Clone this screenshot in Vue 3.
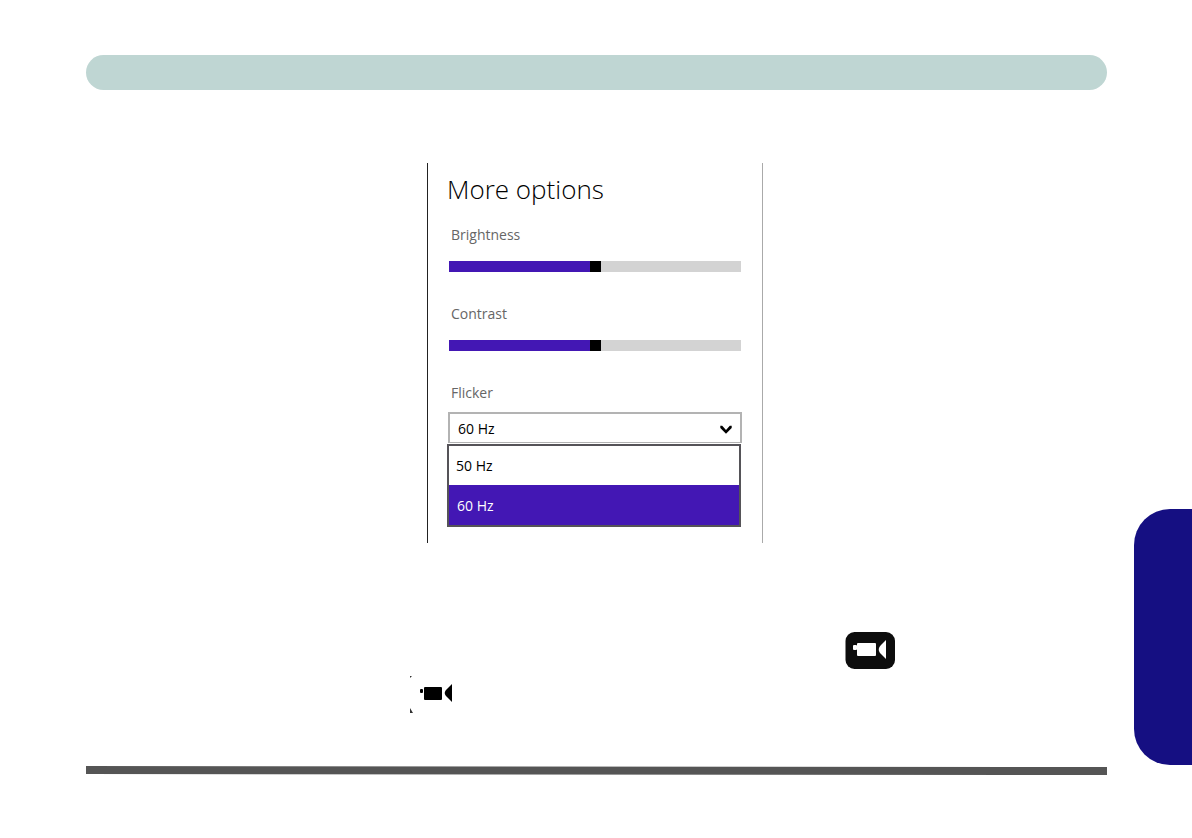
<script setup>
import { ref } from 'vue'

const sliders = ref([
  { id: 'brightness', label: 'Brightness', value: 50 },
  { id: 'contrast', label: 'Contrast', value: 50 },
])
const rates = ['50 Hz', '60 Hz']
const flicker = ref('60 Hz')
</script>

<template>
  <div class="page">
    <main class="content">
      <header class="banner"></header>

      <div class="figure">
        <section class="panel">
          <h1>More options</h1>
          <div v-for="s in sliders" :key="s.id" class="field">
            <label :for="s.id">{{ s.label }}</label>
            <input
              :id="s.id"
              v-model.number="s.value"
              type="range"
              min="0"
              max="100"
              :style="{ '--fill': s.value + '%' }"
            />
          </div>
          <div class="field">
            <label for="flicker">Flicker</label>
            <div class="combo">
              <select id="flicker" v-model="flicker">
                <option v-for="r in rates" :key="r">{{ r }}</option>
              </select>
              <svg class="chevron" viewBox="0 0 12 9" aria-hidden="true">
                <path d="M0.3 0.8h1.9L6 5 9.8 0.8h1.9V3L6 8.8 0.3 3z" />
              </svg>
            </div>
            <div class="options" role="listbox" aria-label="Flicker">
              <button
                v-for="r in rates"
                :key="r"
                type="button"
                role="option"
                :aria-selected="r === flicker"
                :class="{ selected: r === flicker }"
                @click="flicker = r"
              >{{ r }}</button>
            </div>
          </div>
        </section>
      </div>

      <div class="icons">
        <svg class="camera dark" viewBox="0 0 50 37" aria-hidden="true">
          <rect x="0.5" width="49.5" height="37" rx="9" fill="#0d0d0d" />
          <g fill="#fff">
            <rect x="8" y="13" width="4" height="5" rx="1" />
            <rect x="12" y="11" width="19" height="13" rx="1" />
            <path d="M41 8v19l-5-5c-3-3-3-6 0-9z" />
          </g>
        </svg>
        <svg class="camera light" viewBox="0 0 50 37" aria-hidden="true">
          <path d="M0 0h2L0 2zM0 32l3 5H0z" fill="#333" />
          <g fill="#000">
            <rect x="10" y="13" width="3" height="4" rx="1" />
            <rect x="14" y="11" width="18" height="13" rx="1" />
            <path d="M42 8v18l-5-5c-3-3-3-5 0-8z" />
          </g>
        </svg>
      </div>

      <svg class="rule" viewBox="0 0 1021 9" preserveAspectRatio="none" aria-hidden="true">
        <path d="M0 0L1021 1V9L0 8z" fill="#555" />
      </svg>
    </main>
    <aside class="tab"></aside>
  </div>
</template>

<style>
body {
  background: #fff;
}
</style>

<style scoped>
.page {
  display: grid;
  grid-template-columns: minmax(0, 1fr) 58px;
  column-gap: 27px;
  padding-left: 86px;
  font-family: "Open Sans", "Noto Sans", sans-serif;
}
.content {
  padding-top: 55px;
}
.banner {
  height: 35px;
  border-radius: 18px;
  background: #bfd6d3;
}
.figure {
  display: flex;
  justify-content: center;
  margin-top: 73px;
  padding-right: 3px;
}
.panel {
  box-sizing: border-box;
  width: 336px;
  padding: 8px 20px 16px 19px;
  border-left: 1px solid #222;
  border-right: 1px solid #aaa;
}
h1 {
  margin: 0 0 10px;
  font-family: "Open Sans", "Noto Sans", sans-serif;
  font-size: 26px;
  font-weight: 300;
  line-height: 36px;
  color: #000;
}
.field {
  display: flex;
  flex-direction: column;
}
label {
  margin: 7px 0 16px 4px;
  font-size: 14px;
  line-height: 21px;
  color: #666;
}
input {
  appearance: none;
  box-sizing: border-box;
  width: auto;
  height: 11px;
  margin: 0 1px 24px 2px;
  background: linear-gradient(to right, #4317b4 var(--fill), #d3d3d3 var(--fill));
}
input::-webkit-slider-thumb {
  appearance: none;
  width: 11px;
  height: 11px;
  background: #000;
}
.field:last-child label {
  margin-bottom: 9px;
}
.combo {
  display: grid;
  align-items: center;
  margin: 0 0 1px 1px;
}
select,
.chevron {
  grid-area: 1 / 1;
}
select {
  appearance: none;
  box-sizing: border-box;
  width: 100%;
  height: 31px;
  padding: 0 8px;
  border: 2px solid #b3b3b3;
  border-bottom-width: 1px;
  border-radius: 0;
  background: #fff;
  font: 14px/21px "Open Sans", "Noto Sans", sans-serif;
  color: #000;
}
.chevron {
  justify-self: end;
  width: 12px;
  height: 9px;
  margin: 3px 10px 0 0;
  pointer-events: none;
}
.options {
  display: flex;
  flex-direction: column;
  margin-right: 1px;
  border: 2px solid #555358;
}
.options button {
  height: 39px;
  padding: 0 7px;
  border: 0;
  background: #fff;
  font: 14px/21px "Open Sans", "Noto Sans", sans-serif;
  text-align: left;
  color: #000;
}
.options button.selected {
  height: 40px;
  padding: 0 8px;
  background: #4317b4;
  color: #fff;
}
.icons {
  display: grid;
  grid-template-columns: 324fr 50px 385fr 50px 212fr;
  grid-template-rows: 37px 37px;
  row-gap: 7px;
  margin-top: 89px;
}
.camera {
  width: 50px;
  height: 37px;
}
.dark {
  grid-area: 1 / 4;
}
.light {
  grid-area: 2 / 2;
}
.rule {
  display: block;
  width: 100%;
  height: 9px;
  margin-top: 53px;
}
.tab {
  height: 256px;
  margin-top: 509px;
  border-radius: 36px 0 0 36px;
  background: #150f82;
}
</style>
